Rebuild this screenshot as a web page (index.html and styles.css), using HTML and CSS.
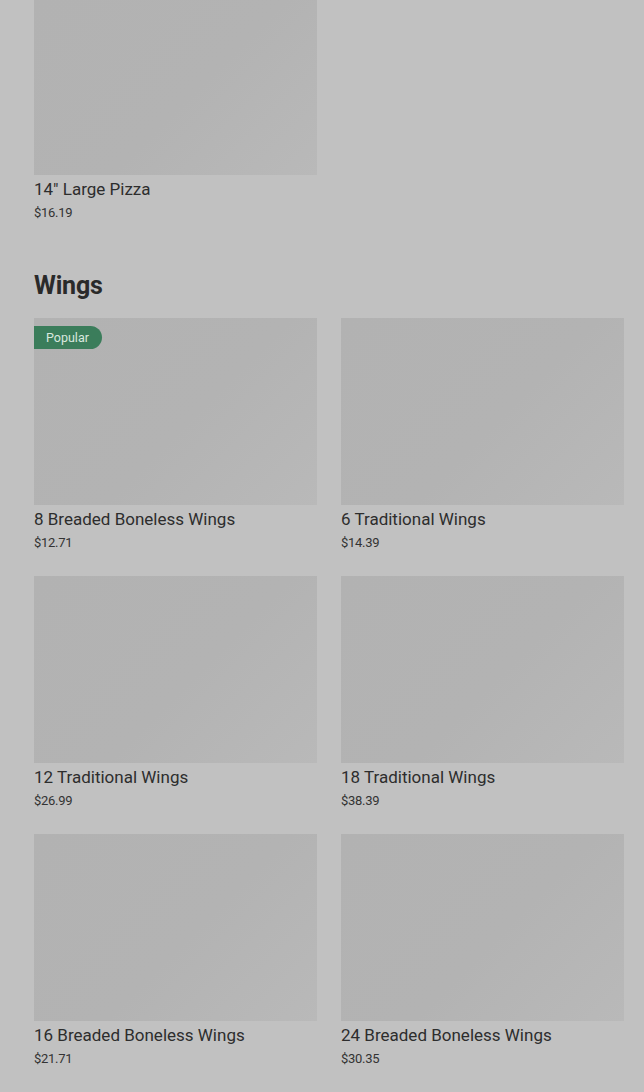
FILE: index.html
```html
<!DOCTYPE html>
<html lang="en">
<head>
  <meta charset="UTF-8">
  <meta name="viewport" content="width=device-width, initial-scale=1.0">
  <title>Menu</title>
  <link rel="stylesheet" href="styles.css">
</head>
<body>
  <div class="menu">
    <section class="category">
      <div class="grid">
        <div class="item">
          <div class="photo photo-cut"></div>
          <div class="name">14" Large Pizza</div>
          <div class="price">$16.19</div>
        </div>
      </div>
    </section>

    <section class="category">
      <h2>Wings</h2>
      <div class="grid">
        <div class="item">
          <div class="photo"><span class="badge">Popular</span></div>
          <div class="name">8 Breaded Boneless Wings</div>
          <div class="price">$12.71</div>
        </div>
        <div class="item">
          <div class="photo"></div>
          <div class="name">6 Traditional Wings</div>
          <div class="price">$14.39</div>
        </div>
        <div class="item">
          <div class="photo"></div>
          <div class="name">12 Traditional Wings</div>
          <div class="price">$26.99</div>
        </div>
        <div class="item">
          <div class="photo"></div>
          <div class="name">18 Traditional Wings</div>
          <div class="price">$38.39</div>
        </div>
        <div class="item">
          <div class="photo"></div>
          <div class="name">16 Breaded Boneless Wings</div>
          <div class="price">$21.71</div>
        </div>
        <div class="item">
          <div class="photo"></div>
          <div class="name">24 Breaded Boneless Wings</div>
          <div class="price">$30.35</div>
        </div>
      </div>
    </section>
  </div>
</body>
</html>
```

FILE: styles.css
```css
body {
  margin: 0;
  background-color: #c1c1c1;
  font-family: Roboto, "Liberation Sans", sans-serif;
  color: #2b2b2b;
  height: 1092px;
  overflow: hidden;
}

.menu {
  padding: 0 20px 0 34px;
}

.category {
  margin-bottom: 48px;
}

.category h2 {
  margin: 0 0 16px 0;
  font-size: 25px;
  font-weight: 700;
  line-height: 32px;
  letter-spacing: -0.2px;
  color: #2a2a2a;
}

.grid {
  display: grid;
  grid-template-columns: 283px 283px;
  column-gap: 24px;
  row-gap: 24px;
}

.item {
  display: flex;
  flex-direction: column;
}

.photo {
  position: relative;
  height: 187px;
  background: linear-gradient(135deg, #b2b2b2 0%, #b3b3b3 55%, #b9b9b9 100%);
}

.photo-cut {
  height: 175px;
}

.badge {
  position: absolute;
  top: 8px;
  left: 0;
  padding: 0 13px 0 12px;
  height: 23px;
  line-height: 23px;
  font-size: 12.5px;
  color: #d9e8df;
  background-color: #3b7d5b;
  border-radius: 0 12px 12px 0;
}

.name {
  margin-top: 3px;
  font-size: 17px;
  line-height: 22px;
  color: #2d2d2d;
}

.price {
  margin-top: 3px;
  font-size: 13px;
  line-height: 19px;
  color: #333;
  letter-spacing: -0.3px;
}
```
